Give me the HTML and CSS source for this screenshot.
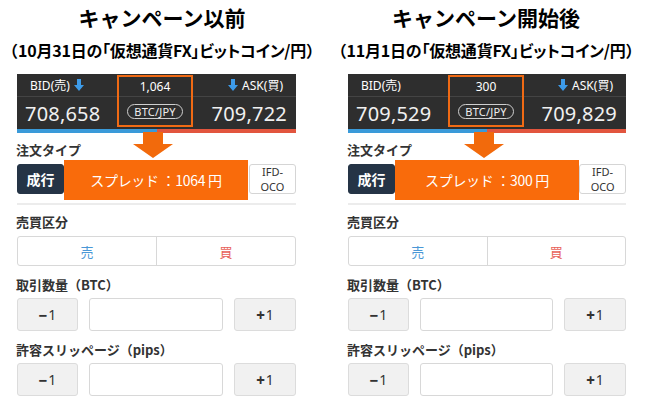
FILE: index.html
```html
<!DOCTYPE html>
<html lang="ja">
<head>
<meta charset="utf-8">
<title>スプレッド比較</title>
<link rel="stylesheet" href="styles.css">
</head>
<body>
<div class="page">
  <section class="panel panel-before">
    <h1 class="title">キャンペーン以前</h1>
    <p class="subtitle"><span class="paren">（</span>10月31日の「仮想通貨FX」ビットコイン/円<span class="paren">）</span></p>
    <div class="content">
      <div class="quote">
        <div class="qcol qcol-bid">
          <div class="qtop">BID(売)<svg class="dn" viewBox="0 0 10 12"><path d="M3 0h4v6h3l-5 6-5-6h3z"/></svg></div>
          <div class="qprice">708,658</div>
        </div>
        <div class="qcol qcol-mid">
          <div class="qtop qtop-mid">1,064</div>
          <div class="qprice qprice-mid"><span class="pair">BTC/JPY</span></div>
        </div>
        <div class="qcol qcol-ask">
          <div class="qtop qtop-ask"><svg class="dn" viewBox="0 0 10 12"><path d="M3 0h4v6h3l-5 6-5-6h3z"/></svg>ASK(買)</div>
          <div class="qprice qprice-ask">709,722</div>
        </div>
      </div>
      <div class="bar"><span class="bar-bid"></span><span class="bar-ask"></span></div>

      <div class="label label-a">注文タイプ</div>
      <div class="types">
        <div class="type type-on">成行</div>
        <div class="type"></div>
        <div class="type"></div>
        <div class="type"></div>
        <div class="type type-two"><span>IFD-</span><span>OCO</span></div>
      </div>
      <div class="divider"></div>

      <div class="label label-a">売買区分</div>
      <div class="side">
        <div class="side-btn side-sell">売</div>
        <div class="side-btn side-buy">買</div>
      </div>

      <div class="label label-b">取引数量（BTC）</div>
      <div class="stepper">
        <div class="step"><b>−</b>1</div>
        <div class="field"></div>
        <div class="step"><b>+</b>1</div>
      </div>

      <div class="label label-b">許容スリッページ（pips）</div>
      <div class="stepper">
        <div class="step"><b>−</b>1</div>
        <div class="field"></div>
        <div class="step"><b>+</b>1</div>
      </div>

      <svg class="arrow" viewBox="0 0 40 26"><path d="M10 0h20v12h10l-20 14-20-14h10z"/></svg>
      <div class="spread">スプレッド ：1064 円</div>
    </div>
  </section>

  <section class="panel panel-after">
    <h1 class="title">キャンペーン開始後</h1>
    <p class="subtitle"><span class="paren">（</span>11月1日の「仮想通貨FX」ビットコイン/円<span class="paren">）</span></p>
    <div class="content">
      <div class="quote">
        <div class="qcol qcol-bid">
          <div class="qtop">BID(売)</div>
          <div class="qprice">709,529</div>
        </div>
        <div class="qcol qcol-mid">
          <div class="qtop qtop-mid">300</div>
          <div class="qprice qprice-mid"><span class="pair">BTC/JPY</span></div>
        </div>
        <div class="qcol qcol-ask">
          <div class="qtop qtop-ask"><svg class="dn" viewBox="0 0 10 12"><path d="M3 0h4v6h3l-5 6-5-6h3z"/></svg>ASK(買)</div>
          <div class="qprice qprice-ask">709,829</div>
        </div>
      </div>
      <div class="bar"><span class="bar-bid"></span><span class="bar-ask"></span></div>

      <div class="label label-a">注文タイプ</div>
      <div class="types">
        <div class="type type-on">成行</div>
        <div class="type"></div>
        <div class="type"></div>
        <div class="type"></div>
        <div class="type type-two"><span>IFD-</span><span>OCO</span></div>
      </div>
      <div class="divider"></div>

      <div class="label label-a">売買区分</div>
      <div class="side">
        <div class="side-btn side-sell">売</div>
        <div class="side-btn side-buy">買</div>
      </div>

      <div class="label label-b">取引数量（BTC）</div>
      <div class="stepper">
        <div class="step"><b>−</b>1</div>
        <div class="field"></div>
        <div class="step"><b>+</b>1</div>
      </div>

      <div class="label label-b">許容スリッページ（pips）</div>
      <div class="stepper">
        <div class="step"><b>−</b>1</div>
        <div class="field"></div>
        <div class="step"><b>+</b>1</div>
      </div>

      <svg class="arrow" viewBox="0 0 40 26"><path d="M10 0h20v12h10l-20 14-20-14h10z"/></svg>
      <div class="spread">スプレッド ：300 円</div>
    </div>
  </section>
</div>
</body>
</html>
```
FILE: styles.css
```css
* { box-sizing: border-box; }
html, body { margin: 0; padding: 0; background: #fff; }
body {
  font-family: "Noto Sans", "Noto Sans CJK JP", sans-serif;
  color: #333;
  width: 648px;
  height: 403px;
  overflow: hidden;
}
.page { display: flex; }
.panel { width: 324px; }
.title {
  margin: 3px 0 0;
  height: 28px;
  line-height: 28px;
  font-family: "Noto Sans CJK JP", sans-serif;
  font-weight: 700;
  font-size: 21px;
  text-align: center;
  color: #000;
}
.subtitle {
  margin: 9px 0 0;
  height: 20px;
  line-height: 20px;
  font-family: "Noto Sans CJK JP", sans-serif;
  font-weight: 700;
  font-size: 16px;
  font-feature-settings: "palt";
  letter-spacing: -0.2px;
  text-align: center;
  color: #000;
  white-space: nowrap;
}
.paren { font-feature-settings: normal; }
.content {
  position: relative;
  margin-top: 14px;
  width: 279px;
  margin-left: 17px;
}
.panel-after .content { margin-left: 24px; width: 278px; }

.quote {
  display: flex;
  background: #2e2e2e;
  height: 55px;
  color: #fff;
}
.qcol { display: flex; flex-direction: column; }
.qcol-bid { width: 100px; }
.qcol-ask { flex: 1; }
.qcol-mid {
  width: 76px;
  border: 2px solid #f06a14;
  margin: 1px 0 2px;
}
.qtop {
  height: 23px;
  display: flex;
  align-items: center;
  gap: 4px;
  font-size: 12px;
  padding-left: 13px;
  border-bottom: 1px solid #444;
}
.qtop-mid { justify-content: center; padding-left: 0; height: 20px; }
.qtop-ask { justify-content: flex-end; padding-left: 0; padding-right: 13px; }
.dn { width: 10px; height: 12px; fill: #3d9be9; }
.qprice {
  flex: 1;
  display: flex;
  align-items: center;
  padding-left: 8px;
  font-size: 20px;
  color: #f0f0f0;
  letter-spacing: 0.2px;
}
.qprice-mid { justify-content: center; padding-left: 0; }
.qprice-ask { justify-content: flex-end; padding-left: 0; padding-right: 9px; }
.pair {
  font-size: 11px;
  line-height: 13px;
  padding: 0 6px;
  border: 1px solid #cfcfcf;
  border-radius: 8px;
  color: #eee;
}
.bar { display: flex; height: 4px; }
.bar-bid { flex: 1; background: #3a9ad9; }
.bar-ask { flex: 1; background: #e2553e; }

.label {
  font-family: "Noto Sans CJK JP", sans-serif;
  font-weight: 700;
  font-size: 13px;
  line-height: 18px;
  color: #333;
  margin-left: -1px;
}
.label-a { margin-top: 8px; margin-bottom: 5px; }
.label-b { margin-top: 10px; margin-bottom: 4px; }

.types { display: flex; gap: 11px; height: 30px; }
.type {
  flex: 1;
  display: flex;
  align-items: center;
  justify-content: center;
  border: 1px solid #d5d5d5;
  border-radius: 3px;
  font-size: 13px;
  color: #333;
  background: #fff;
}
.type-on {
  background: #253446;
  border-color: #253446;
  color: #fff;
  font-family: "Noto Sans CJK JP", sans-serif;
  font-weight: 700;
  font-size: 14px;
}
.type-two {
  flex-direction: column;
  font-size: 11px;
  line-height: 15px;
}
.divider { height: 2px; background: #ececec; margin-top: 9px; }

.side {
  display: flex;
  height: 30px;
  border: 1px solid #d8d8d8;
  border-radius: 3px;
}
.side-btn {
  flex: 1;
  display: flex;
  align-items: center;
  justify-content: center;
  font-size: 13px;
}
.side-sell { color: #4a97d6; border-right: 1px solid #d8d8d8; }
.side-buy { color: #e8625a; }

.stepper {
  display: grid;
  grid-template-columns: 61px 1fr 62px;
  gap: 11px;
  height: 33px;
}
.step {
  display: flex;
  align-items: center;
  justify-content: center;
  gap: 1px;
  background: #f1f1f1;
  border: 1px solid #dcdcdc;
  border-radius: 3px;
  font-size: 14px;
  color: #333;
}
.step b { font-weight: 800; font-size: 15px; }
.field { border: 1px solid #d8d8d8; border-radius: 3px; background: #fff; }

.arrow {
  position: absolute;
  left: 116px;
  top: 58px;
  width: 40px;
  height: 26px;
  fill: #f26a0c;
}
.spread {
  position: absolute;
  left: 47px;
  top: 86px;
  width: 184px;
  height: 40px;
  background: #f96b0b;
  color: #fff;
  display: flex;
  align-items: center;
  justify-content: center;
  font-family: "Noto Sans CJK JP", sans-serif;
  font-size: 14px;
  letter-spacing: -0.3px;
  white-space: pre;
}
```
